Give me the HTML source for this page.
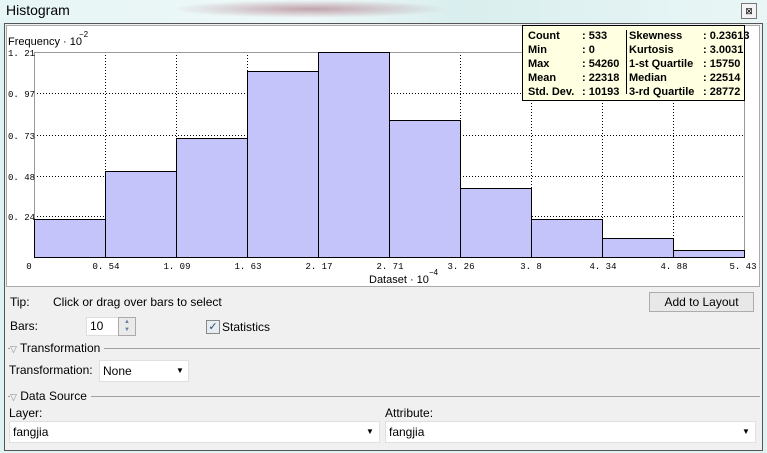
<!DOCTYPE html>
<html><head><style>
body{margin:0;width:767px;height:453px;overflow:hidden;background:#dff3f3;font-family:"Liberation Sans",sans-serif;font-size:12px;color:#000;position:relative}
.abs{position:absolute}
.t{font-family:"Liberation Sans",sans-serif;font-size:12px}
.st div{white-space:nowrap}
</style></head><body>
<div class="abs" style="left:0;top:0;width:767px;height:23px;background:linear-gradient(90deg,#e6f5f5 0%,#eef8f8 40%,#d9eeee 60%,#eaf6f6 100%)"></div>
<div class="abs" style="left:170px;top:0;width:280px;height:18px;background:radial-gradient(ellipse at center,rgba(140,60,80,.45),rgba(140,60,80,0) 70%)"></div>
<div class="abs t" style="left:6px;top:2px;font-size:14px">Histogram</div>
<div class="abs" style="left:741px;top:3px;width:14px;height:14px;border:1px solid #777;background:#f4f4f4;font-size:9px;text-align:center;line-height:14px">⊠</div>
<div class="abs" style="left:4px;top:23px;width:757px;height:426px;border:1px solid #555;background:#f0f0f0"></div>
<div class="abs" style="left:6px;top:25px;width:752px;height:260px;border:1px solid #aaa;background:#fff"></div>
<svg class="abs" style="left:0;top:0" width="767" height="300">
<g stroke="#000" stroke-dasharray="1,2" stroke-width="1">
<line x1="34" y1="93.5" x2="745" y2="93.5"/><line x1="34" y1="135.5" x2="745" y2="135.5"/><line x1="34" y1="176.5" x2="745" y2="176.5"/><line x1="34" y1="216.5" x2="745" y2="216.5"/>
<line x1="105.5" y1="52" x2="105.5" y2="257"/><line x1="176.5" y1="52" x2="176.5" y2="257"/><line x1="247.5" y1="52" x2="247.5" y2="257"/><line x1="318.5" y1="52" x2="318.5" y2="257"/><line x1="389.5" y1="52" x2="389.5" y2="257"/><line x1="460.5" y1="52" x2="460.5" y2="257"/><line x1="531.5" y1="52" x2="531.5" y2="257"/><line x1="602.5" y1="52" x2="602.5" y2="257"/><line x1="673.5" y1="52" x2="673.5" y2="257"/>
</g>
<rect x="34.5" y="52.5" width="710" height="205" fill="none" stroke="#999"/>
<g fill="#c4c4fb" stroke="#000" stroke-width="1">
<rect x="34.5" y="219.5" width="71" height="38"/>
<rect x="105.5" y="171.5" width="71" height="86"/>
<rect x="176.5" y="138.5" width="71" height="119"/>
<rect x="247.5" y="71.5" width="71" height="186"/>
<rect x="318.5" y="52.5" width="71" height="205"/>
<rect x="389.5" y="120.5" width="71" height="137"/>
<rect x="460.5" y="188.5" width="71" height="69"/>
<rect x="531.5" y="219.5" width="71" height="38"/>
<rect x="602.5" y="238.5" width="71" height="19"/>
<rect x="673.5" y="250.5" width="71" height="7"/>
</g>
<g font-family="Liberation Mono,monospace" font-size="9" text-anchor="middle">
<text x="29" y="269">0</text><text x="106" y="269">0. 54</text><text x="177" y="269">1. 09</text><text x="248" y="269">1. 63</text><text x="319" y="269">2. 17</text><text x="390" y="269">2. 71</text><text x="461" y="269">3. 26</text><text x="531" y="269">3. 8</text><text x="603" y="269">4. 34</text><text x="674" y="269">4. 88</text><text x="743" y="269">5. 43</text>
</g>
<g font-family="Liberation Mono,monospace" font-size="9">
<text x="8" y="56">1. 21</text><text x="8" y="97">0. 97</text><text x="8" y="139">0. 73</text><text x="8" y="180">0. 48</text><text x="8" y="220">0. 24</text>
</g>
<text x="8" y="45" font-family="Liberation Sans,sans-serif" font-size="11">Frequency · 10</text><text x="79" y="37" font-size="8" font-family="Liberation Sans">−2</text>
<text x="369" y="283" font-family="Liberation Sans,sans-serif" font-size="11">Dataset · 10</text><text x="429" y="275" font-size="8" font-family="Liberation Sans">−4</text>
</svg>
<div class="abs st" style="left:522px;top:25px;width:221px;height:74px;border:1px solid #000;background:#ffffe1;font-family:'Liberation Sans',sans-serif;font-weight:bold;font-size:11px;color:#000;line-height:14px">
<div class="abs" style="left:103px;top:4px;width:1px;height:64px;background:#000"></div>
<div class="abs" style="left:5px;top:3px">Count<br>Min<br>Max<br>Mean<br>Std. Dev.</div>
<div class="abs" style="left:59px;top:3px">: 533<br>: 0<br>: 54260<br>: 22318<br>: 10193</div>
<div class="abs" style="left:106px;top:3px">Skewness<br>Kurtosis<br>1-st Quartile<br>Median<br>3-rd Quartile</div>
<div class="abs" style="left:180px;top:3px">: 0.23613<br>: 3.0031<br>: 15750<br>: 22514<br>: 28772</div>
</div>
<div class="abs t" style="left:10px;top:295px">Tip:</div>
<div class="abs t" style="left:53px;top:295px">Click or drag over bars to select</div>
<div class="abs t" style="left:649px;top:292px;width:103px;height:18px;border:1px solid #adadad;background:#e8e8e8;text-align:center;line-height:18px">Add to Layout</div>
<div class="abs t" style="left:10px;top:319px">Bars:</div>
<div class="abs" style="left:86px;top:317px;width:31px;height:17px;background:#fff;border:1px solid #ddd"></div>
<div class="abs t" style="left:90px;top:319px">10</div>
<div class="abs" style="left:118px;top:317px;width:16px;height:17px;border:1px solid #aaa;background:#eaeaea;font-size:6px;line-height:8px;text-align:center;color:#6a7fa0">▲<br>▼</div>
<div class="abs" style="left:206px;top:320px;width:12px;height:12px;border:1px solid #888;background:#e4ecf4;font-size:11px;line-height:12px;text-align:center;color:#345">✓</div>
<div class="abs t" style="left:222px;top:320px">Statistics</div>
<div class="abs" style="left:8px;top:348px;width:752px;height:1px;background:#a0a0a0"></div>
<div class="abs t" style="left:10px;top:341px;background:#f0f0f0;padding-right:4px"><span style="font-size:9px;color:#888">▽</span> Transformation</div>
<div class="abs t" style="left:9px;top:363px">Transformation:</div>
<div class="abs" style="left:99px;top:360px;width:88px;height:20px;background:#fff;border:1px solid #e0e0e0"></div>
<div class="abs t" style="left:103px;top:364px">None</div>
<div class="abs" style="left:176px;top:366px;font-size:8px">▼</div>
<div class="abs" style="left:8px;top:396px;width:752px;height:1px;background:#a0a0a0"></div>
<div class="abs t" style="left:10px;top:389px;background:#f0f0f0;padding-right:4px"><span style="font-size:9px;color:#888">▽</span> Data Source</div>
<div class="abs t" style="left:9px;top:406px">Layer:</div>
<div class="abs t" style="left:385px;top:406px">Attribute:</div>
<div class="abs" style="left:9px;top:421px;width:369px;height:20px;background:#fff;border:1px solid #e0e0e0"></div>
<div class="abs t" style="left:13px;top:425px">fangjia</div>
<div class="abs" style="left:366px;top:427px;font-size:8px">▼</div>
<div class="abs" style="left:385px;top:421px;width:369px;height:20px;background:#fff;border:1px solid #e0e0e0"></div>
<div class="abs t" style="left:389px;top:425px">fangjia</div>
<div class="abs" style="left:742px;top:427px;font-size:8px">▼</div>
</body></html>
